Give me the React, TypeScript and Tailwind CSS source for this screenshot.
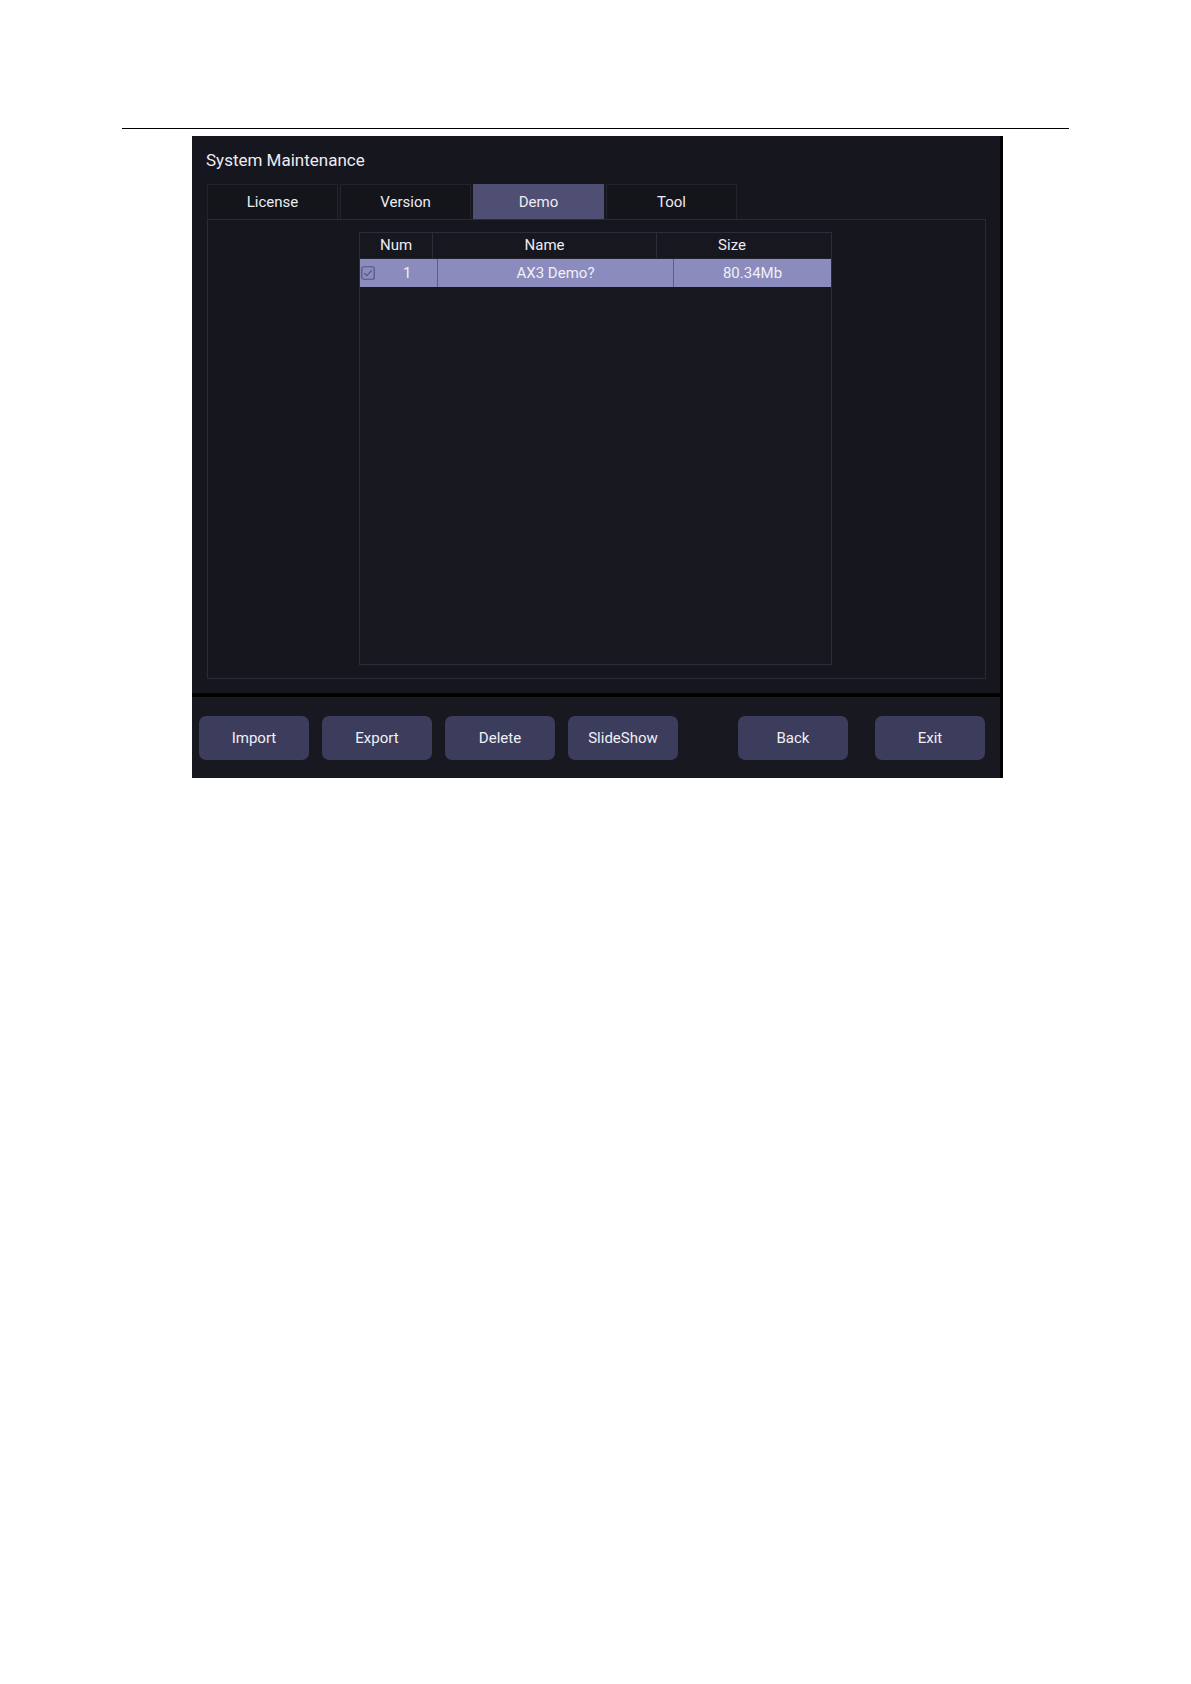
const tabs = ["License", "Version", "Demo", "Tool"];
const leftButtons = ["Import", "Export", "Delete", "SlideShow"];

const font = { fontFamily: "Roboto, 'Noto Sans', sans-serif" };

const Btn = ({ label }: { label: string }) => (
  <button className="w-[110px] h-[44px] rounded-[7px] bg-[#3c3d5c] text-[15px] text-[#f0f0f6]">
    {label}
  </button>
);

const App = () => {
  return (
    <div className="min-h-[1684px] bg-white" style={font}>
      <div className="pt-[128px] pl-[122px]">
        <div className="w-[947px] h-px bg-black"></div>
      </div>

      <div className="ml-[192px] mt-[7px] w-[811px] bg-[#16161e] border-r-[3px] border-black">
        {/* Header + tabs */}
        <div className="pl-[15px] pr-[14px] pt-[12px] pb-[14px]">
          <div className="text-[17px] leading-[24px] text-[#ececf2] -ml-px">System Maintenance</div>

          <div className="flex gap-[2px] mt-[12px]">
            {tabs.map((t) => (
              <div
                key={t}
                className={`w-[131px] h-[35px] flex items-center justify-center text-[15px] text-[#ececf2] border border-b-0 ${
                  t === "Demo" ? "bg-[#4e4f73] border-[#4e4f73]" : "bg-[#14141b] border-[#23232e]"
                }`}
              >
                {t}
              </div>
            ))}
          </div>

          {/* Content box */}
          <div className="w-[779px] h-[460px] border border-[#2a2a38] pt-[12px] pl-[151px]">
            <div className="w-[473px] h-[433px] border border-[#2c2c3b] bg-[#17171f]">
              <div className="flex h-[26px] text-[15px] text-[#ececf2] border-b border-[#22222d]">
                <div className="w-[73px] flex items-center justify-center border-r border-[#2c2c3b]">Num</div>
                <div className="w-[224px] flex items-center justify-center border-r border-[#2c2c3b]">Name</div>
                <div className="w-[150px] flex items-center justify-center">Size</div>
              </div>
              <div className="flex h-[28px] bg-[#8b8bbd] text-[15px] text-[#f0f0f8]">
                <div className="w-[78px] flex items-center border-r border-[#5c5c86] pl-[1px]">
                  <svg width="14" height="14" viewBox="0 0 14 14" className="shrink-0">
                    <rect x="0.75" y="0.75" width="12.5" height="12.5" rx="2" fill="none" stroke="#55557c" strokeWidth="1.2" />
                    <path d="M3.2 7.2 L5.8 9.6 L10.8 4.4" fill="none" stroke="#55557c" strokeWidth="1.2" />
                  </svg>
                  <span className="ml-[28px]">1</span>
                </div>
                <div className="w-[236px] flex items-center justify-center border-r border-[#5c5c86]">AX3 Demo?</div>
                <div className="flex-1 flex items-center justify-center">80.34Mb</div>
              </div>
            </div>
          </div>
        </div>

        {/* Separator */}
        <div className="h-[4px] bg-black"></div>

        {/* Button bar */}
        <div className="h-[81px] bg-[#181820] flex items-center pl-[7px] pt-[1px]">
          <div className="flex gap-[13px]">
            {leftButtons.map((b) => (
              <Btn key={b} label={b} />
            ))}
          </div>
          <div className="ml-[60px] flex gap-[27px]">
            <Btn label="Back" />
            <Btn label="Exit" />
          </div>
        </div>
      </div>
    </div>
  );
};

export default App;
